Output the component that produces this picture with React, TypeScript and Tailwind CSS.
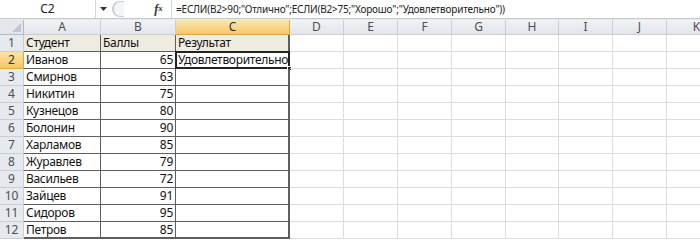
import React from "react";

const cols = [
  { k: "A", w: 77 },
  { k: "B", w: 75 },
  { k: "C", w: 114 },
  { k: "D", w: 54 },
  { k: "E", w: 54 },
  { k: "F", w: 54 },
  { k: "G", w: 54 },
  { k: "H", w: 53 },
  { k: "I", w: 54 },
  { k: "J", w: 54 },
  { k: "K", w: 60 },
];

const data: [string, string][] = [
  ["Иванов", "65"],
  ["Смирнов", "63"],
  ["Никитин", "75"],
  ["Кузнецов", "80"],
  ["Болонин", "90"],
  ["Харламов", "85"],
  ["Журавлев", "79"],
  ["Васильев", "72"],
  ["Зайцев", "91"],
  ["Сидоров", "95"],
  ["Петров", "85"],
];

const font = { fontFamily: '"Noto Sans", "Open Sans", sans-serif' };

export default function App() {
  const rows: { cells: string[]; n: number }[] = [
    { n: 1, cells: ["Студент", "Баллы", "Результат"] },
    ...data.map((d, i) => ({ n: i + 2, cells: [d[0], d[1], i === 0 ? "Удовлетворительно" : ""] })),
  ];
  return (
    <div className="w-[700px] h-[240px] overflow-hidden bg-white" style={font}>
      {/* formula bar */}
      <div className="flex h-[19px] items-center border-b border-[#c4c8ce] bg-white text-[11px] text-[#222]">
        <div className="flex h-full w-[96px] items-center justify-center border-r border-[#d5d8dc] text-[12px]">C2</div>
        <div className="flex w-[14px] items-center justify-center">
          <svg width="7" height="4" viewBox="0 0 7 4"><path d="M0 0h7L3.5 4z" fill="#333" /></svg>
        </div>
        <div className="flex w-[40px] items-center">
          <div className="ml-[2px] h-[16px] w-[12px] rounded-l-full border-l-2 border-y border-[#c9ccd1] bg-[#f4f5f7]" />
        </div>
        <div className="flex w-[22px] items-center justify-center border-r border-[#d5d8dc] pr-1 italic text-[12px] font-bold text-[#333]" style={{ fontFamily: '"Liberation Serif", serif' }}>
          f<span className="text-[9px]">x</span>
        </div>
        <div className="pl-[4px] whitespace-nowrap text-[10px] tracking-[-0.2px]">
          =ЕСЛИ(B2&gt;90;"Отлично";ЕСЛИ(B2&gt;75;"Хорошо";"Удовлетворительно"))
        </div>
      </div>
      <div className="h-[1px] bg-[#e8eaed]" />
      {/* column headers */}
      <div className="flex h-[15px]">
        <div className="relative w-[24px] shrink-0 border-r border-b border-[#b4bac2] bg-[#e3e6ea]">
          <svg className="absolute bottom-[2px] right-[2px]" width="9" height="9" viewBox="0 0 9 9"><path d="M9 0V9H0z" fill="#c3c7cd" /></svg>
        </div>
        {cols.map((c) => (
          <div
            key={c.k}
            className={`flex shrink-0 items-center justify-center border-r border-b text-[12px] leading-none ${
              c.k === "C"
                ? "border-[#d9a93d] bg-gradient-to-b from-[#fbe6b0] to-[#f4c865] text-[#333]"
                : "border-[#c9ced4] bg-gradient-to-b from-[#f1f3f5] to-[#e2e6ea] text-[#4a4f55]"
            }`}
            style={{ width: c.w }}
          >
            {c.k}
          </div>
        ))}
      </div>
      {/* rows */}
      {rows.map((r) => (
        <div key={r.n} className="flex h-[17px]">
          <div
            className={`flex w-[24px] shrink-0 items-center justify-center border-r border-b text-[12px] leading-none ${
              r.n === 2
                ? "border-[#d9a93d] bg-gradient-to-b from-[#fbe2a6] to-[#f4c865] text-[#333]"
                : "border-[#c9ced4] bg-[#e6e9ed] text-[#4a4f55]"
            }`}
          >
            {r.n}
          </div>
          {cols.map((c, ci) => {
            const inTable = ci < 3;
            const text = inTable ? r.cells[ci] : "";
            const last = r.n === 12;
            return (
              <div
                key={c.k}
                className={`relative flex shrink-0 items-center whitespace-nowrap px-[2px] text-[12px] leading-none tracking-[-0.3px] text-[#111] ${
                  inTable
                    ? `border-r border-[#5e5e5e] ${last ? "border-b-2" : "border-b"} ${r.n === 1 ? "bg-[#eeece1]" : "bg-white"} ${ci === 1 && r.n > 1 ? "justify-end" : ""} ${ci === 2 ? "border-r-2" : ""}`
                    : "border-r border-b border-[#dadcdf]"
                }`}
                style={{ width: c.w }}
              >
                {text}
                {r.n === 2 && ci === 2 && (
                  <>
                    <div className="pointer-events-none absolute -left-[1px] -top-[1px] -right-[2px] -bottom-[1px] border-2 border-[#222]" />
                    <div className="absolute -right-[4px] -bottom-[3px] h-[5px] w-[5px] border border-white bg-[#222]" />
                  </>
                )}
              </div>
            );
          })}
        </div>
      ))}
    </div>
  );
}
